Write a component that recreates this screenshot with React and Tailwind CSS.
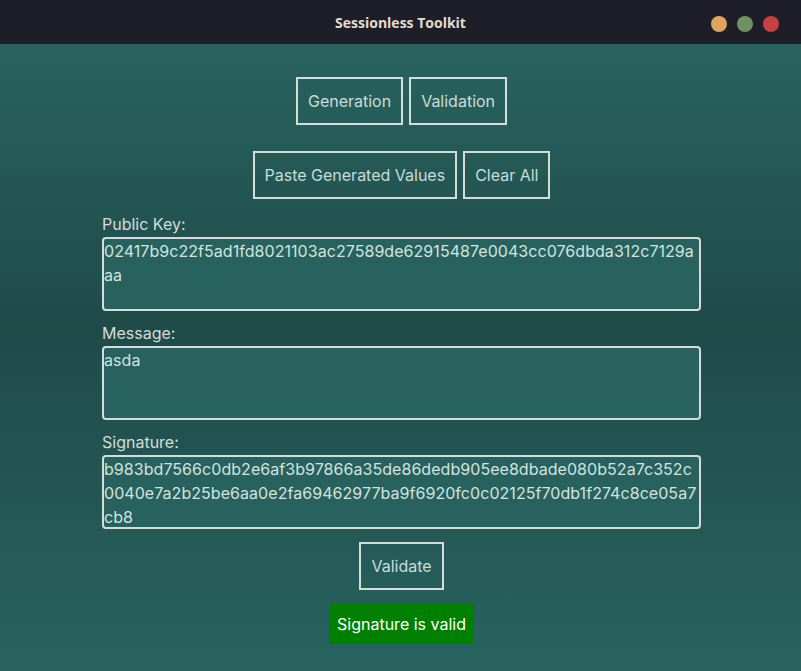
import React from "react";

const pubKey = "02417b9c22f5ad1fd8021103ac27589de62915487e0043cc076dbda312c7129aaa";
const message = "asda";
const signature =
  "b983bd7566c0db2e6af3b97866a35de86dedb905ee8dbade080b52a7c352c0040e7a2b25be6aa0e2fa69462977ba9f6920fc0c02125f70db1f274c8ce05a7cb8";

function Btn({ children }) {
  return (
    <button className="border-2 border-[#d6dcdb] px-[10px] h-[48px] text-[16px] text-[#c9dcd8]">
      {children}
    </button>
  );
}

function Field({ label, value, first }) {
  return (
    <div className={first ? "mt-[15px]" : "mt-[12px]"}>
      <label className="block text-[16px] leading-[20px] text-[#d3dcd9]">{label}</label>
      <textarea
        readOnly
        value={value}
        className="mt-[3px] block w-[599px] h-[74px] resize-none overflow-hidden rounded-[4px] border-2 border-[#d6dcdb] bg-[#27625e] p-0 text-[16px] leading-[24px] tracking-[0.05px] text-[#d3e2df] outline-none break-all"
      />
    </div>
  );
}

export default function App() {
  return (
    <div className="h-screen flex flex-col bg-[#1d1e27] font-['Inter',sans-serif]">
      {/* title bar */}
      <div className="relative h-[44px] shrink-0 flex items-center justify-center">
        <span className="font-['Open_Sans',sans-serif] font-bold text-[14px] text-[#e3dccd]">
          Sessionless Toolkit
        </span>
        <div className="absolute right-[22px] top-[16px] flex gap-[10px]">
          <span className="w-[16px] h-[16px] rounded-full bg-[#dfa55e]" />
          <span className="w-[16px] h-[16px] rounded-full bg-[#6f9263]" />
          <span className="w-[16px] h-[16px] rounded-full bg-[#c8403f]" />
        </div>
      </div>

      {/* content */}
      <div className="flex-1 flex flex-col items-center pt-[33px] pl-[2px] bg-[linear-gradient(180deg,#28635f_0%,#1f4b49_45%,#28635f_100%)]">
        <div className="flex gap-[6px]">
          <Btn>Generation</Btn>
          <Btn>Validation</Btn>
        </div>
        <div className="flex gap-[6px] mt-[26px]">
          <Btn>Paste Generated Values</Btn>
          <Btn>Clear All</Btn>
        </div>

        <div className="flex flex-col">
          <Field first label="Public Key:" value={pubKey} />
          <Field label="Message:" value={message} />
          <Field label="Signature:" value={signature} />
        </div>

        <div className="mt-[13px]">
          <Btn>Validate</Btn>
        </div>

        <div className="mt-[13px] h-[41px] px-[8px] flex items-center bg-[#008000] text-white text-[16px]">
          Signature is valid
        </div>
      </div>
    </div>
  );
}
